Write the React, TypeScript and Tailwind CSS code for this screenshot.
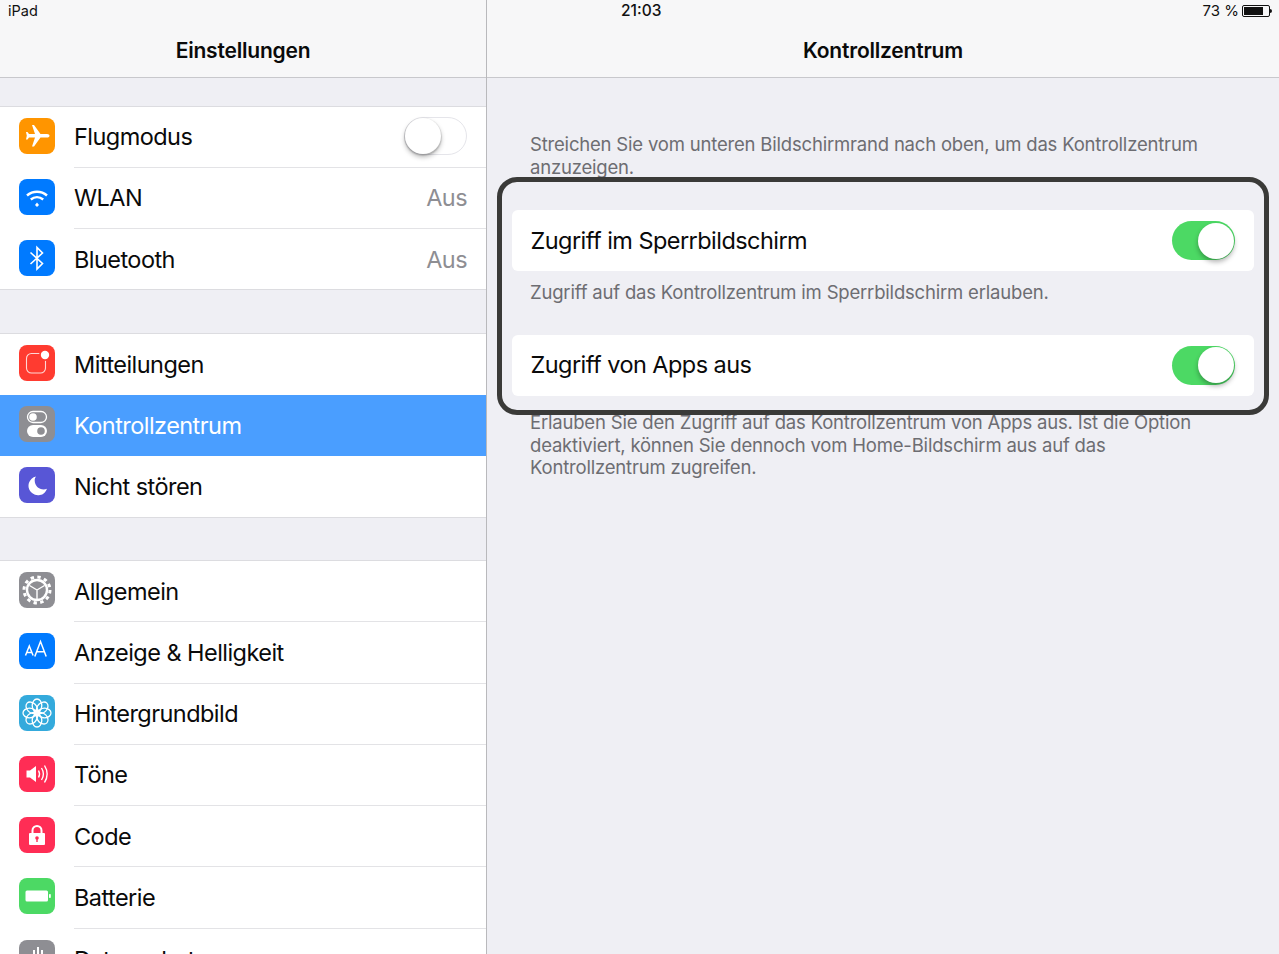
import type { ReactNode } from 'react'

function Toggle({ on }: { on: boolean }) {
  if (on) {
    return (
      <div className="flex h-[39px] w-[63px] justify-end rounded-full bg-[#4cd964] p-[1.500px]">
        <div className="h-[36px] w-[36px] rounded-full bg-white shadow-[0_3px_5px_rgba(0,0,0,0.3)]" />
      </div>
    )
  }
  return (
    <div className="mb-[1px] h-[38px] w-[63px] rounded-full border border-[#e5e5ea] bg-white">
      <div className="h-[36px] w-[36px] rounded-full bg-white shadow-[0_1px_1px_1px_rgba(0,0,0,0.12),0_3px_5px_rgba(0,0,0,0.28)]" />
    </div>
  )
}

function Tile({ bg, children }: { bg: string; children: ReactNode }) {
  return (
    <div className={`mb-[3px] flex h-[36px] w-[36px] shrink-0 items-center justify-center overflow-hidden rounded-[8px] ${bg}`}>
      {children}
    </div>
  )
}

const planeIcon = (
  <svg width="36" height="36" viewBox="0 0 36 36" fill="white">
    <path d="M13 7h2l6.500 9h6.500c1.500 0 2.500.8 2.500 1.800s-1 1.800-2.500 1.800h-6.500L15 28.500h-2l3-9h-6l-1.500 2H7l.8-3.700L7 14h1.500l1.500 2h6z" />
  </svg>
)

const wifiIcon = (
  <svg width="36" height="36" viewBox="0 0 36 36" fill="none" stroke="white" strokeWidth="2.500">
    <path d="M8 16.500c5.800-5 14.200-5 20 0" />
    <path d="M11.800 20.500c3.700-3 8.700-3 12.400 0" />
    <path d="M16 26l2-2.500 2 2.500-2 2z" fill="white" stroke="none" />
  </svg>
)

const bluetoothIcon = (
  <svg width="36" height="36" viewBox="0 0 36 36" fill="none" stroke="white" strokeWidth="1.600">
    <path d="M11.500 12.500l12 11-5.500 5.500V7.500l5.500 5.500-12 11" />
  </svg>
)

const notifIcon = (
  <svg width="36" height="36" viewBox="0 0 36 36" fill="none">
    <rect x="7.500" y="8.500" width="19" height="19.500" rx="5" stroke="white" strokeOpacity="0.8" strokeWidth="1.100" />
    <circle cx="26" cy="10" r="6" fill="#ff3b30" />
    <circle cx="26" cy="10" r="4.200" fill="white" />
  </svg>
)

const controlIcon = (
  <svg width="36" height="36" viewBox="0 0 36 36">
    <rect x="8.500" y="5.500" width="19" height="11" rx="5.500" fill="none" stroke="white" strokeWidth="1.300" />
    <circle cx="14" cy="11" r="3.800" fill="white" />
    <rect x="8" y="19" width="20" height="12" rx="6" fill="white" />
    <circle cx="22" cy="25" r="3.800" fill="#8e8e93" />
  </svg>
)

const moonIcon = (
  <svg width="36" height="36" viewBox="0 0 36 36" fill="white">
    <path d="M17 9.500a9.500 9.500 0 1 0 11 12.300c-1 .4-2.200.6-3.300.6-5 0-9-4-9-9 0-1.400.4-2.800 1.300-3.900z" />
  </svg>
)

const gearIcon = (
  <svg width="36" height="36" viewBox="0 0 36 36" fill="none" stroke="white">
    <circle cx="18" cy="18" r="13" strokeWidth="3" strokeDasharray="3.400 3.400" />
    <circle cx="18" cy="18" r="10" strokeWidth="2.400" />
    <path d="M18 18l-7.500-4.500M18 18l7.500-4.500M18 18v9" strokeWidth="1.400" />
  </svg>
)

const textSizeIcon = (
  <svg width="36" height="36" viewBox="0 0 36 36" fill="none" stroke="white" strokeWidth="1.500">
    <path d="M6.500 22.500l3.800-9.500 3.800 9.500M7.800 19.500h5" />
    <path d="M15.800 23.500l5.700-15 5.700 15M17.700 18.800h7.600" />
  </svg>
)

const flowerIcon = (
  <svg width="36" height="36" viewBox="0 0 36 36" fill="none" stroke="white" strokeWidth="1.300">
    {[0, 45, 90, 135, 180, 225, 270, 315].map((deg) => (
      <ellipse key={deg} cx="18" cy="10.500" rx="4.800" ry="6.500" transform={`rotate(${deg} 18 18)`} />
    ))}
    <circle cx="18" cy="18" r="3" />
  </svg>
)

const soundIcon = (
  <svg width="36" height="36" viewBox="0 0 36 36" fill="none" stroke="white" strokeWidth="1.400">
    <path d="M7.500 14.500h3.500l6-4.500v16l-6-4.500H7.500z" fill="white" stroke="none" />
    <path d="M19.500 14.500c1.300 2.200 1.300 4.800 0 7" />
    <path d="M22.500 12c2.400 3.800 2.400 8.200 0 12" />
    <path d="M25.500 9.500c3.300 5.300 3.300 11.700 0 17" />
  </svg>
)

const lockIcon = (
  <svg width="36" height="36" viewBox="0 0 36 36">
    <path d="M13.500 17v-3.500a4.500 4.500 0 0 1 9 0V17" fill="none" stroke="white" strokeWidth="2" />
    <rect x="10" y="16" width="16" height="12" rx="1" fill="white" />
    <circle cx="18" cy="21" r="1.800" fill="#ff2d55" />
    <rect x="17.300" y="21" width="1.400" height="4" fill="#ff2d55" />
  </svg>
)

const batteryTileIcon = (
  <svg width="36" height="36" viewBox="0 0 36 36" fill="white">
    <rect x="6.500" y="12.500" width="22.500" height="11" rx="1.500" />
    <rect x="30" y="16" width="1.800" height="4" rx="0.800" />
  </svg>
)

const usageIcon = (
  <svg width="36" height="36" viewBox="0 0 36 36" fill="white">
    <rect x="10" y="14" width="2" height="14" />
    <rect x="14" y="10" width="2" height="18" />
    <rect x="18" y="7" width="2" height="21" />
    <rect x="22" y="10" width="2" height="18" />
    <rect x="26" y="15" width="2" height="13" />
  </svg>
)

function Row({
  icon,
  label,
  value,
  toggle,
  selected,
  last,
}: {
  icon: ReactNode
  label: string
  value?: string
  toggle?: boolean
  selected?: boolean
  last?: boolean
}) {
  return (
    <div className={`flex h-[61.250px] items-center pl-[19px] ${selected ? 'bg-[#4a9eff]' : ''}`}>
      {icon}
      <div
        className={`ml-[19px] flex h-full flex-1 items-center justify-between pr-[19px] ${
          last || selected ? '' : 'border-b border-[#e3e3e6]'
        }`}
      >
        <span className={`text-[23.500px] tracking-[-0.55px] ${selected ? 'text-white' : 'text-[#0a0a0a]'}`}>{label}</span>
        {value && <span className="text-[23.500px] tracking-[-0.55px] text-[#8e8e93]">{value}</span>}
        {toggle && <Toggle on={false} />}
      </div>
    </div>
  )
}

function Group({ children }: { children: ReactNode }) {
  return <div className="bg-white shadow-[0_-1px_0_#dcdce0,inset_0_-1px_0_#dcdce0]">{children}</div>
}

function SettingCard({ label }: { label: string }) {
  return (
    <div className="mx-[25px] flex h-[61px] items-center justify-between rounded-[6px] bg-white pl-[18.500px] pr-[19px]">
      <span className="text-[23.500px] tracking-[-0.55px] text-[#0a0a0a]">{label}</span>
      <Toggle on />
    </div>
  )
}

export default function App() {
  return (
    <div
      className="relative flex h-[954px] w-[1279px] overflow-hidden bg-[#efeff4]"
      style={{ fontFamily: 'Inter, "Liberation Sans", sans-serif' }}
    >
      {/* sidebar */}
      <div className="w-[487px] shrink-0 border-r border-[#b9b9bc]">
        <div className="h-[78px] border-b border-[#c8c8cc] bg-[#f7f7f8]">
          <div className="pl-2 pt-[2px] text-[14.500px] leading-[18px] text-[#111]">iPad</div>
          <div className="mt-[18px] text-center text-[21px] font-semibold leading-[26px] tracking-[-0.2px] text-[#0a0a0a]">
            Einstellungen
          </div>
        </div>

        <div className="mt-[28.600px] flex flex-col gap-[43.500px]">
          <Group>
            <Row icon={<Tile bg="bg-[#ff9500]">{planeIcon}</Tile>} label="Flugmodus" toggle />
            <Row icon={<Tile bg="bg-[#007aff]">{wifiIcon}</Tile>} label="WLAN" value="Aus" />
            <Row icon={<Tile bg="bg-[#007aff]">{bluetoothIcon}</Tile>} label="Bluetooth" value="Aus" last />
          </Group>
          <Group>
            <Row icon={<Tile bg="bg-[#ff3b30]">{notifIcon}</Tile>} label="Mitteilungen" last />
            <Row icon={<Tile bg="bg-[#8e8e93]">{controlIcon}</Tile>} label="Kontrollzentrum" selected />
            <Row icon={<Tile bg="bg-[#5856d6]">{moonIcon}</Tile>} label="Nicht stören" last />
          </Group>
          <Group>
            <Row icon={<Tile bg="bg-[#8e8e93]">{gearIcon}</Tile>} label="Allgemein" />
            <Row icon={<Tile bg="bg-[#007aff]">{textSizeIcon}</Tile>} label="Anzeige & Helligkeit" />
            <Row icon={<Tile bg="bg-[#34aadc]">{flowerIcon}</Tile>} label="Hintergrundbild" />
            <Row icon={<Tile bg="bg-[#ff2d55]">{soundIcon}</Tile>} label="Töne" />
            <Row icon={<Tile bg="bg-[#ff2d55]">{lockIcon}</Tile>} label="Code" />
            <Row icon={<Tile bg="bg-[#4cd964]">{batteryTileIcon}</Tile>} label="Batterie" />
            <Row icon={<Tile bg="bg-[#8e8e93]">{usageIcon}</Tile>} label="Datenschutz" last />
          </Group>
        </div>
      </div>

      {/* detail */}
      <div className="flex-1">
        <div className="h-[78px] border-b border-[#c8c8cc] bg-[#f7f7f8]">
          <div className="flex h-[20px] items-center pr-[7px] pt-[2px]">
            <span className="ml-[134px] text-[15.500px] font-medium text-[#111]">21:03</span>
            <div className="ml-auto flex items-center gap-[3px]">
              <span className="text-[15px] text-[#111]">73 %</span>
              <div className="flex items-center">
                <div className="h-[12px] w-[28px] rounded-[2px] border border-[#111] p-px">
                  <div className="h-full w-[19px] bg-[#111]" />
                </div>
                <div className="h-[4px] w-[2px] rounded-r-sm bg-[#111]" />
              </div>
            </div>
          </div>
          <div className="mt-[18px] text-center text-[21px] font-semibold leading-[26px] tracking-[-0.2px] text-[#0a0a0a]">
            Kontrollzentrum
          </div>
        </div>

        <p className="mb-[31px] mt-[55px] px-[43px] text-[18.500px] leading-[23px] tracking-[-0.19px] text-[#6d6d72]">
          Streichen Sie vom unteren Bildschirmrand nach oben, um das Kontrollzentrum anzuzeigen.
        </p>
        <SettingCard label="Zugriff im Sperrbildschirm" />
        <p className="mb-[30.500px] mt-[10px] px-[43px] text-[18.500px] leading-[23px] tracking-[-0.19px] text-[#6d6d72]">
          Zugriff auf das Kontrollzentrum im Sperrbildschirm erlauben.
        </p>
        <SettingCard label="Zugriff von Apps aus" />
        <p className="mt-[15.500px] px-[43px] text-[18.500px] leading-[22.500px] tracking-[-0.19px] text-[#6d6d72]">
          Erlauben Sie den Zugriff auf das Kontrollzentrum von Apps aus. Ist die Option deaktiviert, können Sie dennoch
          vom Home-Bildschirm aus auf das Kontrollzentrum zugreifen.
        </p>
      </div>

      {/* highlight annotation */}
      <div className="absolute left-[497px] top-[177px] h-[238px] w-[772px] rounded-[20px] border-[5.500px] border-[#3a3a38]" />
    </div>
  )
}
